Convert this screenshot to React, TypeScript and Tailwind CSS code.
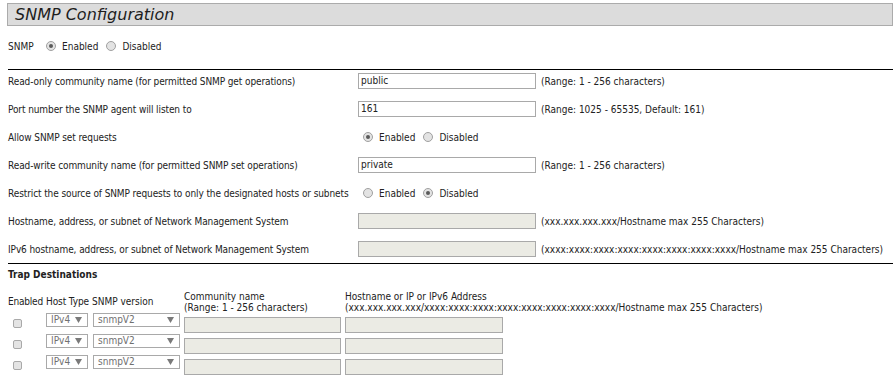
import React from "react";

function Radio({ checked, className = "" }: { checked?: boolean; className?: string }) {
  return (
    <span
      className={
        "inline-flex w-[10px] h-[10px] shrink-0 items-center justify-center rounded-full border border-[#a0a0a0] bg-[#e3e3e3] " +
        className
      }
    >
      {checked ? <span className="block w-[4px] h-[4px] rounded-full bg-[#5a5a5a]" /> : null}
    </span>
  );
}

function RadioGroup({ enabled, gap = "ml-[8px]" }: { enabled: boolean; gap?: string }) {
  return (
    <div className="flex items-center">
      <Radio checked={enabled} />
      <span className="ml-[6px]">Enabled</span>
      <Radio checked={!enabled} className={gap} />
      <span className="ml-[6px]">Disabled</span>
    </div>
  );
}

function TextBox({ value, disabled, w = "w-[178px]" }: { value?: string; disabled?: boolean; w?: string }) {
  return (
    <div
      className={
        w +
        " h-[16px] shrink-0 border border-[#a9a9a9] pl-[2px] flex items-center leading-none " +
        (disabled ? "bg-[#ebebe4]" : "bg-white")
      }
    >
      {value}
    </div>
  );
}

function Arrow() {
  return (
    <svg width="7" height="6" viewBox="0 0 7 6" className="shrink-0">
      <polygon points="0,0 7,0 3.5,6" fill="#7a7a7a" />
    </svg>
  );
}

function Select({ value, w }: { value: string; w: string }) {
  return (
    <div
      className={
        w +
        " h-[14px] shrink-0 border border-[#a9a9a9] bg-white pl-[4px] pr-[5px] flex items-center justify-between text-[#707070] leading-none"
      }
    >
      <span>{value}</span>
      <Arrow />
    </div>
  );
}

function Row({ label, children }: { label: string; children: React.ReactNode }) {
  return (
    <div className="h-[28px] flex items-center pl-[8px]">
      <div className="w-[350px] shrink-0 whitespace-nowrap tracking-[-0.1px]">{label}</div>
      {children}
    </div>
  );
}

function Hint({ children }: { children: React.ReactNode }) {
  return <span className="ml-[5px] whitespace-nowrap">{children}</span>;
}

function TrapRow() {
  return (
    <div className="h-[21px] flex items-start pl-[8px]">
      <div className="w-[38px] shrink-0">
        <span className="block ml-[5px] mt-[6px] w-[9px] h-[9px] rounded-[2px] border border-[#a9a9a9] bg-[#e4e4e4]" />
      </div>
      <Select value="IPv4" w="w-[42px]" />
      <div className="ml-[5px]">
        <Select value="snmpV2" w="w-[87px]" />
      </div>
      <div className="ml-[4px] mt-[4px]">
        <TextBox disabled w="w-[157px]" />
      </div>
      <div className="ml-[4px] mt-[4px]">
        <TextBox disabled w="w-[158px]" />
      </div>
    </div>
  );
}

export default function App() {
  return (
    <div className="w-[893px] h-[383px] overflow-hidden bg-white text-[#222] text-[10px] font-['DejaVu_Sans_Condensed','Liberation_Sans',sans-serif]">
      <div className="ml-[7px] mt-[3px] h-[23px] border border-[#ababab] bg-[#dcdcdc] pl-[7px] flex items-center">
        <span className="italic text-[16px] leading-none text-[#1e1e1e] font-['DejaVu_Sans',sans-serif]">
          SNMP Configuration
        </span>
      </div>

      <div className="mt-[10px] h-[20px] flex items-center pl-[8px]">
        <span className="w-[38px] shrink-0">SNMP</span>
        <RadioGroup enabled gap="ml-[8px]" />
      </div>

      <div className="mt-[13px] ml-[8px] h-px bg-black" />

      <div className="-mt-[3px]">
        <Row label="Read-only community name (for permitted SNMP get operations)">
          <TextBox value="public" />
          <Hint>(Range: 1 - 256 characters)</Hint>
        </Row>
        <Row label="Port number the SNMP agent will listen to">
          <TextBox value="161" />
          <Hint>(Range: 1025 - 65535, Default: 161)</Hint>
        </Row>
        <Row label="Allow SNMP set requests">
          <div className="pl-[5px]">
            <RadioGroup enabled gap="ml-[8px]" />
          </div>
        </Row>
        <Row label="Read-write community name (for permitted SNMP set operations)">
          <TextBox value="private" />
          <Hint>(Range: 1 - 256 characters)</Hint>
        </Row>
        <Row label="Restrict the source of SNMP requests to only the designated hosts or subnets">
          <div className="pl-[5px]">
            <RadioGroup enabled={false} gap="ml-[8px]" />
          </div>
        </Row>
        <Row label="Hostname, address, or subnet of Network Management System">
          <TextBox disabled />
          <Hint>(xxx.xxx.xxx.xxx/Hostname max 255 Characters)</Hint>
        </Row>
        <Row label="IPv6 hostname, address, or subnet of Network Management System">
          <TextBox disabled />
          <Hint>(xxxx:xxxx:xxxx:xxxx:xxxx:xxxx:xxxx:xxxx/Hostname max 255 Characters)</Hint>
        </Row>
      </div>

      <div className="ml-[8px] h-px bg-black" />

      <div className="h-[20px] flex items-center pl-[8px] font-bold">Trap Destinations</div>

      <div className="mt-[6px] h-[23px] flex items-center pl-[8px] leading-[11px] whitespace-nowrap">
        <div className="w-[38px] shrink-0 tracking-[-0.2px]">Enabled</div>
        <div className="w-[46px] shrink-0 tracking-[-0.1px]">Host Type</div>
        <div className="w-[92px] shrink-0">SNMP version</div>
        <div className="w-[161px] shrink-0">
          <div>Community name</div>
          <div>(Range: 1 - 256 characters)</div>
        </div>
        <div>
          <div>Hostname or IP or IPv6 Address</div>
          <div>(xxx.xxx.xxx.xxx/xxxx:xxxx:xxxx:xxxx:xxxx:xxxx:xxxx:xxxx/Hostname max 255 Characters)</div>
        </div>
      </div>

      <div>
        <TrapRow />
        <TrapRow />
        <TrapRow />
      </div>
    </div>
  );
}
